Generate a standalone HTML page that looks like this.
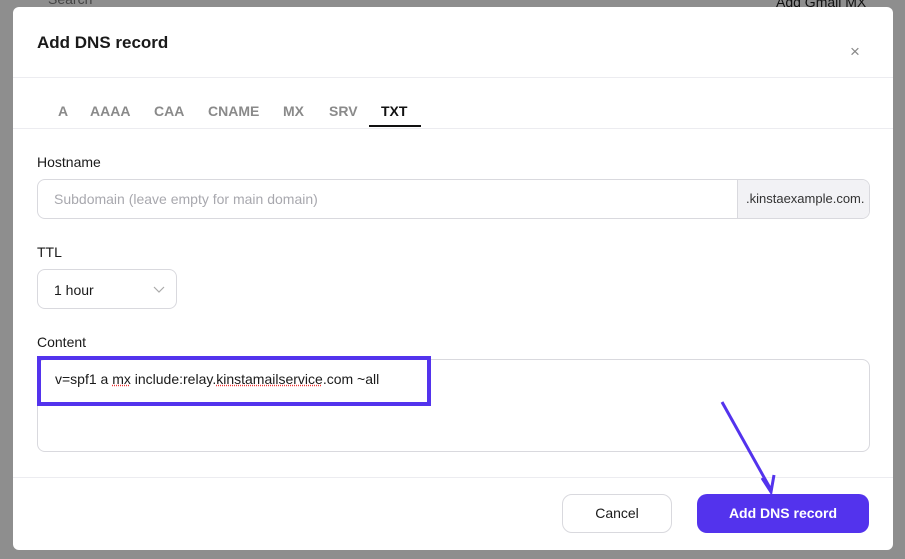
<!DOCTYPE html>
<html><head><style>
body{margin:0;width:905px;height:559px;background:#8e8e8e;font-family:"Liberation Sans",sans-serif;position:relative;overflow:hidden;color:#1a1a1a}
.modal{position:absolute;left:13px;top:7px;width:880px;height:543px;background:#fff;border-radius:6px}
.a{position:absolute}
.hr{position:absolute;left:0;width:880px;height:1px;background:#ececf0}
.tab{position:absolute;top:96px;font-size:14px;color:#8a8a8a;font-weight:bold}
.lbl{position:absolute;font-size:14px;color:#1a1a1a}
.inp{position:absolute;border:1px solid #d9d9de;border-radius:8px;box-sizing:border-box}
</style></head><body>
<div class="a" style="left:48px;top:-9px;font-size:14px;color:#444">Search</div>
<div class="a" style="left:776px;top:-6px;font-size:14px;color:#111">Add Gmail MX record</div>
<div class="modal">
<div class="a" style="left:24px;top:26px;font-size:17px;font-weight:bold">Add DNS record</div>
<div class="a" style="left:837px;top:35px;font-size:17px;color:#888">×</div>
<div class="hr" style="top:70px"></div>
<div class="tab" style="left:45px">A</div>
<div class="tab" style="left:77px">AAAA</div>
<div class="tab" style="left:141px">CAA</div>
<div class="tab" style="left:195px">CNAME</div>
<div class="tab" style="left:270px">MX</div>
<div class="tab" style="left:316px">SRV</div>
<div class="tab" style="left:368px;color:#111">TXT</div>
<div class="a" style="left:356px;top:118px;width:52px;height:2px;background:#111"></div>
<div class="hr" style="top:121px"></div>
<div class="lbl" style="left:24px;top:147px">Hostname</div>
<div class="inp" style="left:24px;top:172px;width:833px;height:40px;overflow:hidden">
 <div class="a" style="left:16px;top:11px;font-size:14px;color:#a8a8ae">Subdomain (leave empty for main domain)</div>
 <div class="a" style="left:699px;top:0;width:134px;height:40px;background:#f2f2f5;border-left:1px solid #d9d9de;font-size:13px;line-height:38px;padding-left:8px;box-sizing:border-box;color:#333">.kinstaexample.com.</div>
</div>
<div class="lbl" style="left:24px;top:237px">TTL</div>
<div class="inp" style="left:24px;top:262px;width:140px;height:40px">
 <div class="a" style="left:16px;top:12px;font-size:14px">1 hour</div>
 <svg class="a" style="left:115px;top:16px" width="12" height="8"><path d="M1 1l5 5 5-5" fill="none" stroke="#aaa" stroke-width="1.2"/></svg>
</div>
<div class="lbl" style="left:24px;top:327px">Content</div>
<div class="inp" style="left:24px;top:352px;width:833px;height:93px"></div>
<div class="a" style="left:24px;top:349px;width:394px;height:50px;border:4px solid #5333ed;box-sizing:border-box"></div>
<div class="a" style="left:42px;top:364px;font-size:14px">v=spf1 a <span style="text-decoration:underline dotted #e33">mx</span> include:relay.<span style="text-decoration:underline dotted #e33">kinstamailservice</span>.com ~all</div>
<div class="hr" style="top:470px"></div>
<div class="a" style="left:549px;top:487px;width:110px;height:39px;border:1px solid #d9d9de;border-radius:10px;box-sizing:border-box;text-align:center;line-height:37px;font-size:14px">Cancel</div>
<div class="a" style="left:684px;top:487px;width:172px;height:39px;background:#5333ed;border-radius:10px;text-align:center;line-height:39px;font-size:14px;color:#fff;font-weight:bold">Add DNS record</div>
</div>
<svg class="a" style="left:0;top:0" width="905" height="559"><path d="M722 402L770 488" stroke="#5333ed" stroke-width="3" fill="none"/><path d="M762 478L771 492L774 475" stroke="#5333ed" stroke-width="3" fill="none"/></svg>
</body></html>
